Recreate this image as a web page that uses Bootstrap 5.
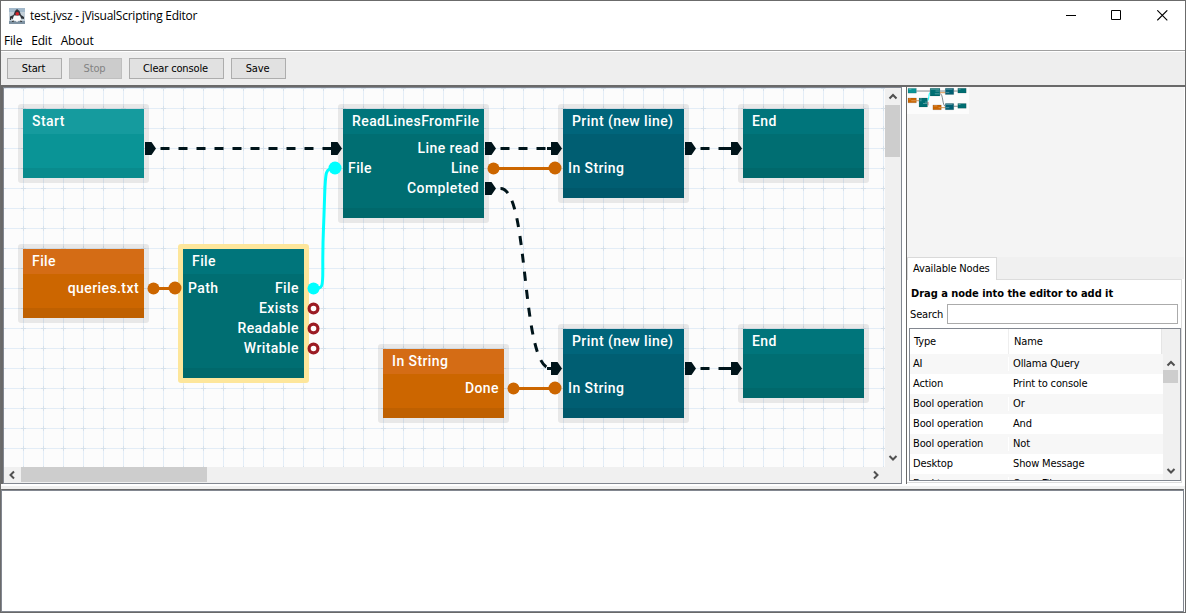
<!DOCTYPE html>
<html lang="en">
<head>
<meta charset="utf-8">
<title>test.jvsz - jVisualScripting Editor</title>
<link href="https://cdn.jsdelivr.net/npm/bootstrap@5.3.0/dist/css/bootstrap.min.css" rel="stylesheet">
<style>
html,body{height:100%;overflow:hidden}
body{font:11px/14px "DejaVu Sans Condensed","DejaVu Sans",sans-serif;color:#000;background:#fff;letter-spacing:-.15px}
.win{height:613px;border:1px solid #6b6b6b;border-bottom-color:#696969}
.titlebar{height:29px;padding-left:8px}
.titletext{font:12px/16px "Open Sans",sans-serif;letter-spacing:-.25px;margin:1px 0 0 5px}
.capbtn{width:45.5px}
.menubar{height:21px;font:12px/22px "Open Sans",sans-serif;letter-spacing:-.2px;padding-left:3px;gap:9px;border-bottom:1px solid #a0a0a0}
.tools{height:34px;padding:6px 0 0 6px;gap:7px;background:#eee;border-top:1px solid #fff}
.tool{height:21px;font-size:11px;line-height:17px;padding:1px 2px 1px 0;border:1px solid #adadad;border-radius:0;background:#e1e1e1;color:#000;letter-spacing:inherit}
.tool:disabled{background:#ccc;border-color:#bfbfbf;color:#838383;opacity:1}
.work{height:399px;border-top:2px solid #696969}
.editor{width:899px;border:1px solid #828790;height:397px}
.edge{width:2px;background:#696969}
.stage{width:881px;height:379px;background-color:#fcfcfc}
.bar{background:#f0f0f0}
.bar svg{fill:none;stroke:#505050;stroke-width:2}
.thumb{background:#cdcdcd}
.gnode{position:absolute;width:121px;color:#fff;font:500 14px/20px Roboto,sans-serif;letter-spacing:.42px;padding-top:29px;
 --t:#00757b;--m:#006e72;--b:#00686b;background:linear-gradient(var(--t) 25px,var(--m) 25px,var(--m) calc(100% - 10px),var(--b) calc(100% - 10px))}
.gnode::before{content:"";position:absolute;inset:-5px;border:5px solid rgba(0,0,0,.08);border-radius:3px}
.picked::before{border-color:#fde69b}
.teal{--t:#159b9e;--m:#0a9496;--b:#098b8d}
.orange{--t:#d46c15;--m:#cc6600;--b:#bf6000}
.blue{--t:#00657b;--m:#005e72;--b:#00586b}
.gtitle{position:absolute;left:9px;top:2px;white-space:nowrap}
.prow{height:20px;padding:0 5px}
.side{width:278px;border-left:1px solid #696969}
.mini{height:170px;background:#f4f4f4}
.tabs{height:22px;background:#f0f0f0}
.tabx{width:90px;height:23px;background:#fff;border:1px solid #d9d9d9;border-bottom:0;padding:4px 0 0 5px;position:relative}
.pane{height:204px;border:1px solid #dcdcdc;border-left:0;padding:6px 3px 0 2px;width:275px;background:#fff}
.hint{font-weight:700;height:18px;padding-left:2px;white-space:nowrap;letter-spacing:-.03px;padding-top:1px}
.find{height:20px;border:1px solid #ababab;border-radius:0;padding:0;width:231px}
.list{height:153px;border:1px solid #828790;margin-top:4px;width:272px}
.thead0{height:25px}
.c1{width:99px;padding-left:3px;border-right:1px solid #eee}
.c2{padding-left:4px}
.trow{height:20px}
.trow:nth-child(odd){background:#f7f7f7}
.trow .c1{border-color:#fff}
.console{border:1px solid #828790;border-top-color:#696969;box-shadow:inset 0 1px #828790;margin-right:1px}
.split{height:5px;flex:none;background:linear-gradient(#fff 2px,#f0f0f0 2px)}
</style>
</head>
<body>
<div class="win d-flex flex-column">
 <header class="titlebar d-flex align-items-center">
  <svg width="16" height="16" viewBox="0 0 16 16"><rect width="16" height="16" fill="#c3cfd8"/><path d="M0 0h16v4H0z" fill="#a3b9cb"/><path d="M0 13h16v3H0z" fill="#7e92a2"/><path d="M1 8.500L4.500 7 6 3l2-2 2.500 2L12 7l3 2v2l-3-.5L11 8H5l-1 3-3-1z" fill="#30343a"/><path d="M5 7.500h6l1.500 5.500L10 12.500 8 14l-2-1.500L3.500 13z" fill="#fafafa"/><path d="M3 13.500l2-.5M11 13l2 .5M1.500 9v3" stroke="#333" fill="none"/><circle cx="8.300" cy="5.800" r="1.800" fill="#d8232a"/></svg>
  <span class="titletext">test.jvsz - jVisualScripting Editor</span>
  <div class="d-flex ms-auto">
   <span class="capbtn text-center"><svg width="11" height="11"><path d="M0 5.500h10" stroke="#000"/></svg></span>
   <span class="capbtn text-center"><svg width="11" height="11"><path d="M.5.5h9v9h-9z" stroke="#000" fill="none"/></svg></span>
   <span class="capbtn text-center"><svg width="11" height="11"><path d="M.3.3l10 10M10.300.3l-10 10" stroke="#000" stroke-width="1.100"/></svg></span>
  </div>
 </header>
 <nav class="menubar d-flex"><span>File</span><span>Edit</span><span>About</span></nav>
 <div class="tools d-flex">
  <button class="tool btn" style="width:55px">Start</button><button class="tool btn" disabled style="width:53px">Stop</button><button class="tool btn" style="width:95px">Clear console</button><button class="tool btn" style="width:55px">Save</button>
 </div>
 <div class="work d-flex flex-shrink-0">
  <div class="edge"></div>
  <div class="editor d-flex">
   <div>
    <div class="stage position-relative overflow-hidden">
     <svg class="position-absolute top-0 start-0" width="881" height="379">
      <defs><pattern id="grid" x="9" y="10" width="20" height="20" patternUnits="userSpaceOnUse"><path d="M0 10.500h20M10.500 0v20" stroke="#e3edf7"/><path d="M8 10.500h5M10.500 8v5" stroke="#d6e1eb"/></pattern></defs>
      <rect width="881" height="379" fill="url(#grid)"/>
     </svg>
     <div class="gnode teal" style="left:19px;top:21px;height:69px"><div class="gtitle">Start</div></div>
     <div class="gnode orange" style="left:19px;top:161px;height:69px"><div class="gtitle">File</div><div class="prow text-end">queries.txt</div></div>
     <div class="gnode picked" style="left:179px;top:161px;height:129px"><div class="gtitle">File</div><div class="prow d-flex justify-content-between"><span>Path</span><span>File</span></div><div class="prow text-end">Exists</div><div class="prow text-end">Readable</div><div class="prow text-end">Writable</div></div>
     <div class="gnode" style="left:339px;top:21px;height:109px;width:141px"><div class="gtitle">ReadLinesFromFile</div><div class="prow text-end">Line read</div><div class="prow d-flex justify-content-between"><span>File</span><span>Line</span></div><div class="prow text-end">Completed</div></div>
     <div class="gnode blue" style="left:559px;top:21px;height:89px"><div class="gtitle">Print (new line)</div><div class="prow"></div><div class="prow">In String</div></div>
     <div class="gnode" style="left:739px;top:21px;height:69px"><div class="gtitle">End</div></div>
     <div class="gnode orange" style="left:379px;top:261px;height:69px"><div class="gtitle">In String</div><div class="prow text-end">Done</div></div>
     <div class="gnode blue" style="left:559px;top:241px;height:89px"><div class="gtitle">Print (new line)</div><div class="prow"></div><div class="prow">In String</div></div>
     <div class="gnode" style="left:739px;top:241px;height:69px"><div class="gtitle">End</div></div>
     <svg class="position-absolute top-0 start-0" width="881" height="379" viewBox="4 88 881 379">
      <defs><path id="ex" d="M0-6.500H6.500L11 0 6.500 6.500H0z" fill="#00141a"/></defs>
      <g fill="none" stroke-width="3">
       <g stroke="#00141a" stroke-dasharray="9 9">
        <path d="M160.500 148.500H335"/><path d="M500.500 148.500H555"/><path d="M700.500 148.500H735"/><path d="M700.500 368.500H735"/>
        <path d="M500.500 188.500C530 188.500 520 368.500 551 368.500"/>
       </g>
       <path d="M323 148.500h8M547 148.500h6M724 148.500h8M724 368.500h8M547 368.500h6" stroke="#00141a"/>
       <path d="M493 168.500h62M154 288.500h20M514 388.500h41" stroke="#cc6600"/>
       <path d="M314 288.500C327 288.500 321 286 323.500 228S323 168.500 335 168.500" stroke="#0ff"/>
      </g>
      <g>
       <use href="#ex" x="145" y="148.500"/><use href="#ex" x="331" y="148.500"/><use href="#ex" x="485" y="148.500"/><use href="#ex" x="485" y="188.500"/><use href="#ex" x="551" y="148.500"/><use href="#ex" x="685" y="148.500"/><use href="#ex" x="731" y="148.500"/><use href="#ex" x="551" y="368.500"/><use href="#ex" x="685" y="368.500"/><use href="#ex" x="731" y="368.500"/>
      </g>
      <g fill="#cc6600"><circle cx="153.500" cy="288.500" r="6"/><circle cx="175" cy="288" r="6.500"/><circle cx="493.500" cy="168.500" r="6"/><circle cx="555" cy="168" r="6.500"/><circle cx="513.500" cy="388.500" r="6"/><circle cx="555" cy="388" r="6.500"/></g>
      <g fill="#0ff"><circle cx="313.500" cy="288.500" r="6"/><circle cx="335" cy="168" r="6.500"/></g>
      <g fill="#fff" stroke="#9b1c24" stroke-width="3.200"><circle cx="313.500" cy="308.500" r="4.400"/><circle cx="313.500" cy="328.500" r="4.400"/><circle cx="313.500" cy="348.500" r="4.400"/></g>
     </svg>
    </div>
    <div class="bar d-flex" style="height:16px">
     <svg width="17" height="16"><path d="M10 4.500L6.500 8l3.500 3.500"/></svg><div class="thumb" style="width:186px;height:15px"></div><svg class="ms-auto" width="17" height="16"><path d="M6 4.500L9.500 8 6 11.500"/></svg>
    </div>
   </div>
   <div class="bar d-flex flex-column" style="width:16px;height:395px">
    <svg width="16" height="17"><path d="M4.500 10.500L8 7l3.500 3.500"/></svg><div class="thumb" style="height:52px;width:15px"></div><svg class="mt-auto" width="16" height="17" style="margin-bottom:16px"><path d="M4.500 6L8 9.500 11.500 6"/></svg>
   </div>
  </div>
  <div style="width:4px"></div>
  <aside class="side">
   <div class="mini"><svg class="d-block" width="62" height="27" viewBox="907 87 62 27"><rect x="907" y="87" width="62" height="27" fill="#fcfcfc"/>
    <g transform="translate(906.400 80.800) scale(.0692)">
     <g fill="none" stroke-width="14"><path d="M144 148H343M484 148h79M684 148h59M684 368h59M490 188C530 188 520 368 563 368" stroke="#00141a" stroke-opacity=".5"/><path d="M484 172h79M144 288h39M504 388h59" stroke="#c60" stroke-opacity=".7"/><path d="M308 288C327 288 321 168 343 168" stroke="#0ff"/><path d="M313 305v50" stroke="#9b1c24" stroke-opacity=".6"/></g>
     <g stroke="#000" stroke-opacity=".12" stroke-width="14"><path fill="#0a9496" d="M23 109h121v69H23z"/><path fill="#c60" d="M23 249h121v69H23zM383 349h121v69H383z"/><path fill="#006e72" d="M183 249h121v129H183zM343 109h141v109H343zM743 109h121v69H743zM743 329h121v69H743z"/><path fill="#005e72" d="M563 109h121v89H563zM563 329h121v89H563z"/></g>
     <path d="M32 122h40M352 122h120M420 148h58M410 188h68M572 122h95M570 168h50M752 122h30M32 262h30M70 288h68M192 262h30M190 288h30M270 308h28M240 328h58M392 362h55M465 388h34M572 342h95M570 388h50M752 342h30" stroke="#fff" stroke-opacity=".45" stroke-width="10"/>
    </g></svg></div>
   <div class="tabs"><div class="tabx">Available Nodes</div></div>
   <div class="pane">
    <div class="hint">Drag a node into the editor to add it</div>
    <div class="d-flex align-items-center"><span class="flex-shrink-0" style="width:38px;padding:1px 0 0 1px">Search</span><input class="find form-control"></div>
    <div class="list d-flex flex-column overflow-hidden">
     <div class="thead0 d-flex flex-shrink-0"><div class="c1" style="padding:6px 0 0 4px">Type</div><div class="c2" style="padding:6px 0 0 5px">Name</div><div class="bar ms-auto h-100" style="width:19px;border-left:1px solid #e5e5e5"></div></div>
     <div class="d-flex flex-shrink-0">
      <div class="flex-grow-1" id="rows"></div>
      <div class="bar d-flex flex-column" style="width:17px;height:126px"><svg width="17" height="16"><path d="M4.500 11.500L8 8l3.500 3.500"/></svg><div class="thumb" style="height:13px;width:15px"></div><svg class="mt-auto" width="17" height="16"><path d="M4.500 5L8 8.500 11.500 5"/></svg></div>
     </div>
    </div>
   </div>
  </aside>
 </div>
 <div class="split"></div>
 <div class="console flex-grow-1"></div>
</div>
<script>
const data=[["AI","Ollama Query"],["Action","Print to console"],["Bool operation","Or"],["Bool operation","And"],["Bool operation","Not"],["Desktop","Show Message"],["Desktop","Open File"]];
document.getElementById("rows").innerHTML=data.map(r=>`<div class="trow d-flex align-items-center"><div class="c1">${r[0]}</div><div class="c2">${r[1]}</div></div>`).join("");
</script>
<script src="https://cdn.jsdelivr.net/npm/bootstrap@5.3.0/dist/js/bootstrap.bundle.min.js"></script>
</body>
</html>
